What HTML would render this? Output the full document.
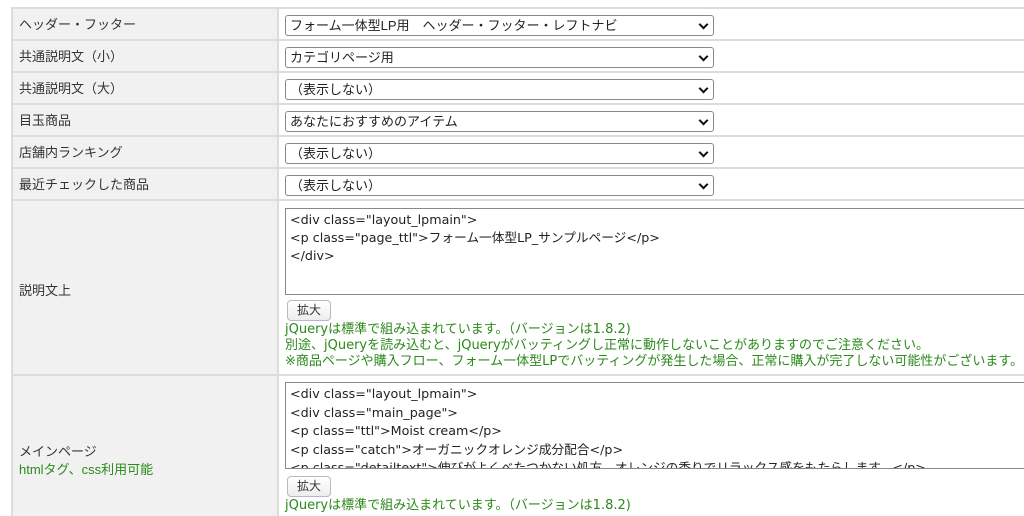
<!DOCTYPE html>
<html><head><meta charset="utf-8"><style>
body{margin:0;width:1024px;height:509px;overflow:hidden;background:#fff;font-family:"Liberation Sans","Noto Sans CJK JP",sans-serif;font-size:13px;color:#333;position:relative}
.row{position:absolute;left:11px;width:1020px;border-top:2px solid #dcdcdc}
.th{position:absolute;left:0;top:0;bottom:0;width:268px;background:#f1f1f1;border-left:2px solid #dcdcdc;border-right:2px solid #dcdcdc;box-sizing:border-box;padding-left:6px}
.sel{position:absolute;left:274px;width:429px;height:21px;border:1px solid #8a8a8a;border-radius:3px;box-sizing:border-box;padding-left:4px;line-height:19px;color:#222;background:#fff}
.sel:after{content:"";position:absolute;right:6px;top:5px;width:5px;height:5px;border-right:2px solid #111;border-bottom:2px solid #111;transform:rotate(45deg)}
.ta{position:absolute;left:274px;width:760px;border:1px solid #888;box-sizing:border-box;padding:2px 4px;line-height:18px;color:#222;overflow:hidden;white-space:pre;background:#fff;font-family:"DejaVu Sans","Noto Sans CJK JP",sans-serif;font-size:12.7px}
.btn{position:absolute;left:276px;width:44px;height:21px;border:1px solid #b8b8c8;border-radius:4px;background:linear-gradient(#fff,#eee);box-sizing:border-box;text-align:center;line-height:19px;font-size:12px;color:#333}
.g{position:absolute;left:274px;color:#2a8a1a;line-height:16px;white-space:nowrap;font-family:"DejaVu Sans","Noto Sans CJK JP",sans-serif;font-size:13px}
</style></head><body>
<div class="row" style="top:7px;height:32px"><div class="th" style="line-height:32px">ヘッダー・フッター</div><div class="sel" style="top:6px">フォーム一体型LP用　ヘッダー・フッター・レフトナビ</div></div>
<div class="row" style="top:39px;height:32px"><div class="th" style="line-height:32px">共通説明文（小）</div><div class="sel" style="top:6px">カテゴリページ用</div></div>
<div class="row" style="top:71px;height:32px"><div class="th" style="line-height:32px">共通説明文（大）</div><div class="sel" style="top:6px">（表示しない）</div></div>
<div class="row" style="top:103px;height:32px"><div class="th" style="line-height:32px">目玉商品</div><div class="sel" style="top:6px">あなたにおすすめのアイテム</div></div>
<div class="row" style="top:135px;height:32px"><div class="th" style="line-height:32px">店舗内ランキング</div><div class="sel" style="top:6px">（表示しない）</div></div>
<div class="row" style="top:167px;height:32px"><div class="th" style="line-height:32px">最近チェックした商品</div><div class="sel" style="top:6px">（表示しない）</div></div>
<div class="row" style="top:199px;height:175px"><div class="th"><div style="position:absolute;top:79px;left:6px">説明文上</div></div>
<div class="ta" style="top:7px;height:87px">&lt;div class="layout_lpmain"&gt;
&lt;p class="page_ttl"&gt;フォーム一体型LP_サンプルページ&lt;/p&gt;
&lt;/div&gt;</div>
<div class="btn" style="top:99px">拡大</div>
<div class="g" style="top:121px">jQueryは標準で組み込まれています。（バージョンは1.8.2)<br>別途、jQueryを読み込むと、jQueryがバッティングし正常に動作しないことがありますのでご注意ください。<br>※商品ページや購入フロー、フォーム一体型LPでバッティングが発生した場合、正常に購入が完了しない可能性がございます。</div></div>
<div class="row" style="top:374px;height:140px"><div class="th"><div style="position:absolute;top:67px;left:6px;line-height:18px">メインページ<br><span style="color:#2a8a1a">htmlタグ、css利用可能</span></div></div>
<div class="ta" style="top:6px;height:87px;line-height:18.5px">&lt;div class="layout_lpmain"&gt;
&lt;div class="main_page"&gt;
&lt;p class="ttl"&gt;Moist cream&lt;/p&gt;
&lt;p class="catch"&gt;オーガニックオレンジ成分配合&lt;/p&gt;
&lt;p class="detailtext"&gt;伸びがよくべたつかない処方。オレンジの香りでリラックス感をもたらします。&lt;/p&gt;</div>
<div class="btn" style="top:100px">拡大</div>
<div class="g" style="top:122px">jQueryは標準で組み込まれています。（バージョンは1.8.2)</div></div>
</body></html>
